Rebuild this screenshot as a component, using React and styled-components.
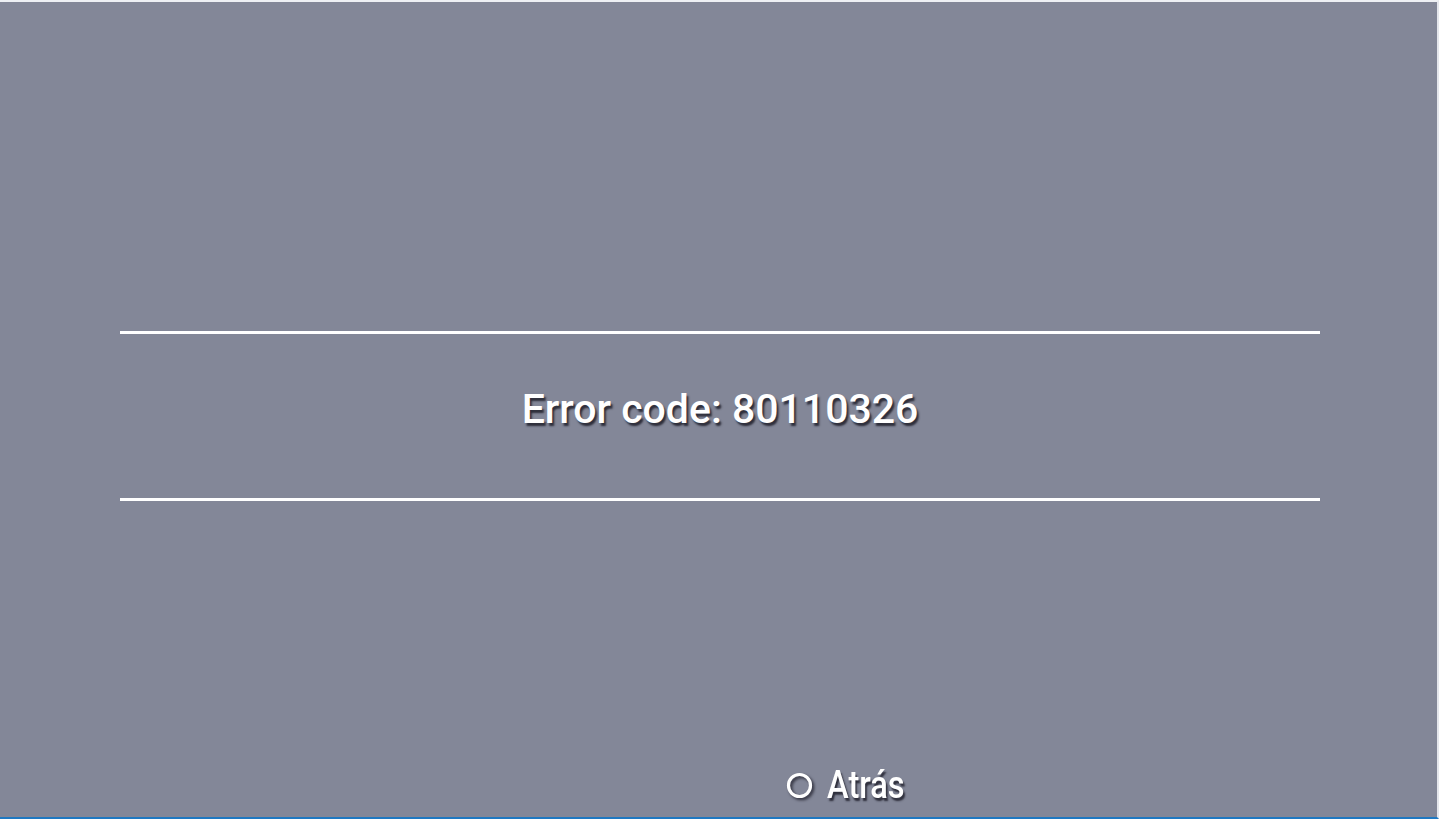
import React from "react";
import styled, { createGlobalStyle } from "styled-components";

const GlobalStyle = createGlobalStyle`
  html, body {
    margin: 0;
    padding: 0;
    overflow: hidden;
  }
  body {
    font-family: Roboto, "Liberation Sans", sans-serif;
  }
`;

const Screen = styled.div`
  width: 1439px;
  height: 819px;
  box-sizing: border-box;
  background: #838798;
  border-top: 2px solid #eef0f4;
  border-right: 2px solid #e4e6ec;
  border-bottom: 2px solid #1f78c1;
  display: flex;
  flex-direction: column;
`;

const Body = styled.div`
  flex: 1;
  display: flex;
  flex-direction: column;
  padding-top: 329px;
`;

const Panel = styled.div`
  margin: 0 117px 0 120px;
  height: 164px;
  border-top: 3px solid #ffffff;
  border-bottom: 3px solid #ffffff;
  display: flex;
  align-items: center;
  justify-content: center;
`;

const shadow = "2px 3px 2px rgba(36, 36, 48, 0.9)";

const Message = styled.div`
  color: #ffffff;
  font-size: 41px;
  font-weight: 500;
  line-height: 48px;
  margin-top: -15px;
  text-shadow: ${shadow};
`;

const Footer = styled.div`
  margin-top: auto;
  height: 64px;
  display: flex;
  align-items: center;
  padding-left: 786px;
  gap: 14px;
`;

const CircleIcon = styled.svg`
  width: 27px;
  height: 27px;
  filter: drop-shadow(2px 2px 1.5px rgba(36, 36, 48, 0.9));
`;

const Label = styled.span`
  color: #ffffff;
  font-size: 38px;
  font-weight: 500;
  line-height: 44px;
  display: inline-block;
  transform: scaleX(0.86);
  transform-origin: left center;
  text-shadow: ${shadow};
`;

export default function App() {
  return (
    <>
      <GlobalStyle />
      <Screen>
        <Body>
          <Panel>
            <Message>Error code: 80110326</Message>
          </Panel>
          <Footer>
            <CircleIcon viewBox="0 0 27 27">
              <circle cx="13.5" cy="13.5" r="11" fill="none" stroke="#ffffff" strokeWidth="3.2" />
            </CircleIcon>
            <Label>Atrás</Label>
          </Footer>
        </Body>
      </Screen>
    </>
  );
}
